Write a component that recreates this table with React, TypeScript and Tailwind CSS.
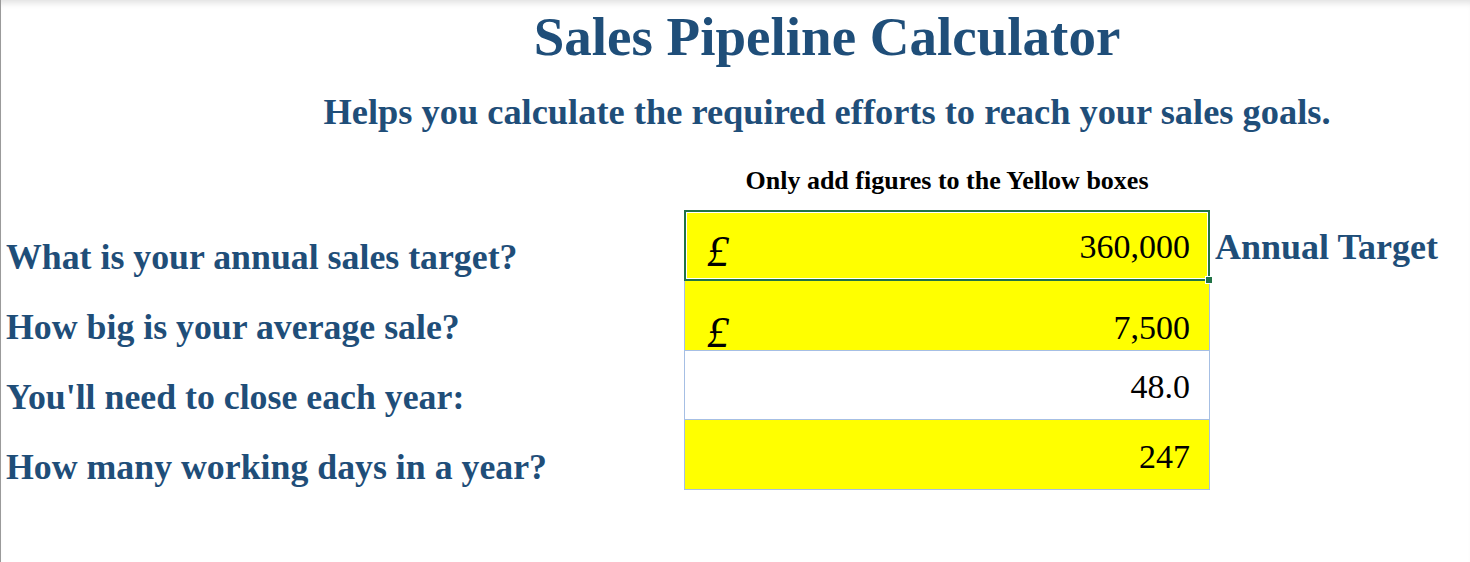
import React from "react";

const labelCls =
  "flex items-end h-[70px] pl-[5px] pb-[4px] text-[35.8px] leading-none font-bold text-[#1f4e79] whitespace-nowrap";

const poundCls = "italic text-[44px] leading-[30px] -mb-[3px]";

export default function App() {
  return (
    <div className="h-[562px] w-full overflow-hidden border-l border-[#9a9a9a] bg-white font-['Liberation_Serif',serif] shadow-[inset_0_7px_6px_-4px_rgba(0,0,0,0.12)]">
      <div className="pl-[183px] text-center text-[#1f4e79] font-bold">
        <h1 className="pt-[9px] text-[55px] leading-[55px]">Sales Pipeline Calculator</h1>
        <p className="mt-[30px] text-[36.4px] leading-[36px]">
          Helps you calculate the required efforts to reach your sales goals.
        </p>
      </div>

      <div className="mt-[38px] grid grid-cols-[683px_526px_1fr]">
        <div />
        <div className="text-center text-[26px] leading-[26px] font-bold text-black">
          Only add figures to the Yellow boxes
        </div>
        <div />
      </div>

      <div className="mt-[16px] grid grid-cols-[683px_526px_1fr]">
        <div className="flex flex-col">
          <div className={labelCls}>What is your annual sales target?</div>
          <div className={labelCls}>How big is your average sale?</div>
          <div className={labelCls}>You'll need to close each year:</div>
          <div className={labelCls}>How many working days in a year?</div>
        </div>

        <div className="flex flex-col text-[34px] leading-none text-black">
          <div className="relative h-[71px] border-2 border-[#217346] bg-[#ffff00] outline outline-1 -outline-offset-[3px] outline-white">
            <div className="flex h-full items-end justify-between pl-[21px] pr-[18px] pb-[15px]">
              <span className={poundCls}>£</span>
              <span>360,000</span>
            </div>
            <div className="absolute -bottom-[4px] -right-[4px] h-[6px] w-[6px] bg-[#217346] outline outline-1 outline-white" />
          </div>
          <div className="flex h-[69px] items-end justify-between border-x border-[#a6bfe4] bg-[#ffff00] pl-[22px] pr-[19px] pb-[5px]">
            <span className={poundCls}>£</span>
            <span>7,500</span>
          </div>
          <div className="flex h-[70px] items-end justify-end border border-[#a6bfe4] bg-white pr-[19px] pb-[15px]">
            <span>48.0</span>
          </div>
          <div className="flex h-[70px] items-end justify-end border-x border-b border-[#a6bfe4] bg-[#ffff00] pr-[19px] pb-[15px]">
            <span>247</span>
          </div>
        </div>

        <div className="pl-[5px] pt-[19px] text-[36px] leading-none font-bold text-[#1f4e79] whitespace-nowrap">
          Annual Target
        </div>
      </div>
    </div>
  );
}
